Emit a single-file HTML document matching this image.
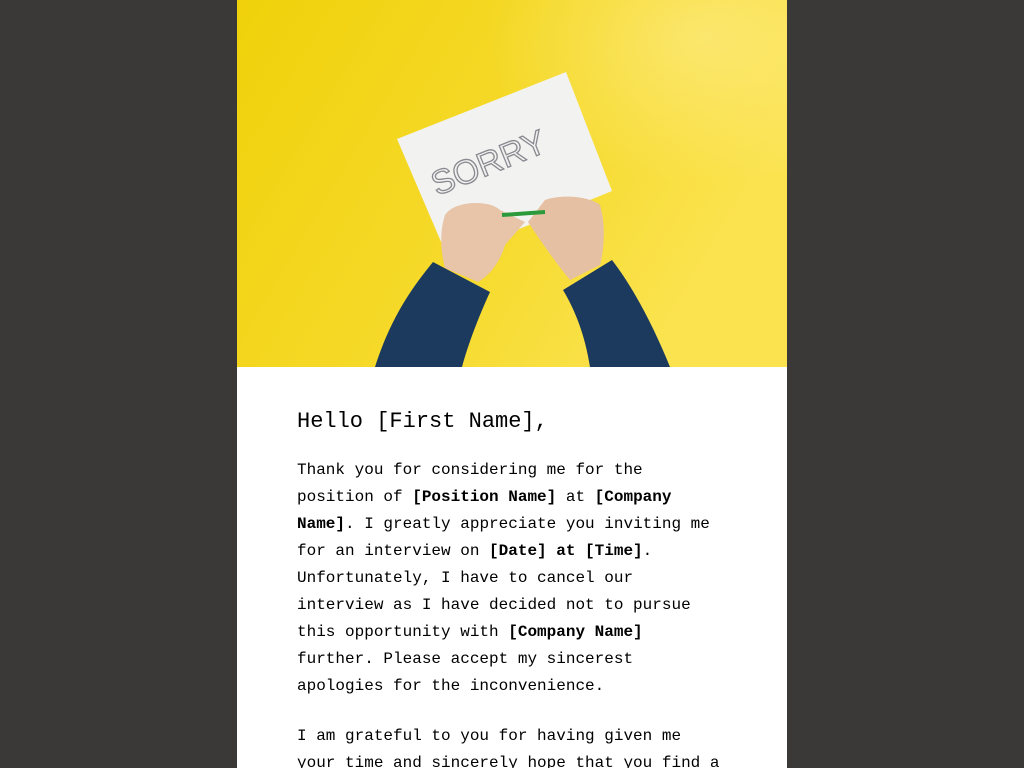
<!DOCTYPE html>
<html><head><meta charset="utf-8"><style>
html,body{margin:0;padding:0;background:#3a3937;}
.col{position:absolute;left:237px;top:0;width:550px;height:768px;background:#fff;overflow:hidden;}
svg{display:block}
.txt{position:absolute;left:60px;top:0;width:432px;font-family:"Liberation Mono",monospace;color:#000;}
h1{font-size:22px;font-weight:normal;margin:0;position:absolute;top:407px;white-space:nowrap;line-height:30px}
p{font-size:16px;line-height:27px;margin:0;}
</style></head><body>
<div class="col">
<svg width="550" height="367" viewBox="237 0 550 367">
<defs>
<linearGradient id="bg" x1="0" y1="0" x2="1" y2="0.4">
<stop offset="0" stop-color="#f0d10a"/><stop offset="0.6" stop-color="#f6da2c"/><stop offset="1" stop-color="#fbe350"/>
</linearGradient>
<radialGradient id="hl" cx="0.85" cy="0.1" r="0.4"><stop offset="0" stop-color="#fff0a0" stop-opacity="0.5"/><stop offset="1" stop-color="#fff0a0" stop-opacity="0"/></radialGradient>
</defs>
<rect x="237" y="0" width="550" height="367" fill="url(#bg)"/>
<rect x="237" y="0" width="550" height="367" fill="url(#hl)"/>
<polygon points="397,139 566,72 612,191 448,258" fill="#f2f2f0"/>
<text x="437" y="196" transform="rotate(-22 437 196)" font-family="Liberation Sans,sans-serif" font-size="34" fill="none" stroke="#8a8890" stroke-width="1.3">SORRY</text>
<path d="M375,367 C390,320 410,290 433,262 L490,292 C478,318 468,345 462,367 Z" fill="#1c3a5e"/>
<path d="M563,290 L612,260 C635,290 655,330 670,367 L590,367 C585,335 575,310 563,290 Z" fill="#1c3a5e"/>
<path d="M445,215 C455,200 490,200 500,210 L525,222 L505,245 C500,262 490,275 478,282 L445,268 C440,250 440,230 445,215 Z" fill="#e8c4a8"/>
<path d="M528,222 L545,200 C560,194 590,196 600,205 C606,225 604,250 600,265 L570,280 C555,262 540,240 528,222 Z" fill="#e6c0a2"/>
<line x1="502" y1="215" x2="545" y2="212" stroke="#2a9a3a" stroke-width="4"/>
</svg>
<div class="txt">
<h1>Hello [First Name],</h1>
<p style="position:absolute;top:457px;width:432px">Thank you for considering me for the position of <b>[Position Name]</b> at <b>[Company Name]</b>. I greatly appreciate you inviting me for an interview on <b>[Date] at [Time]</b>. Unfortunately, I have to cancel our interview as I have decided not to pursue this opportunity with <b>[Company Name]</b> further. Please accept my sincerest apologies for the inconvenience.</p>
<p style="position:absolute;top:723px;width:432px">I am grateful to you for having given me your time and sincerely hope that you find a suitable candidate.</p>
</div>
</div>
</body></html>
